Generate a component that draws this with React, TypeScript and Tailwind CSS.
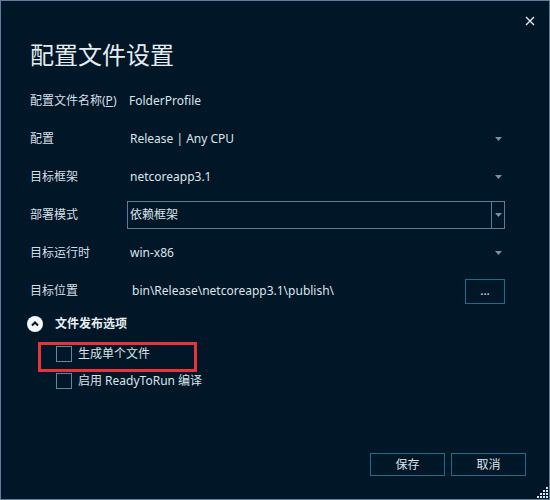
import React from "react";

const font = {
  fontFamily: '"Segoe UI", "Noto Sans", "Noto Sans CJK SC", sans-serif',
};

function Arrow() {
  return (
    <svg width="7" height="4" viewBox="0 0 7 4">
      <path d="M0 0 H7 L3.5 4 Z" fill="#6c95ad" />
    </svg>
  );
}

function Dropdown({ value, active }: { value: string; active?: boolean }) {
  return (
    <div
      className={
        "flex h-[28px] w-[378px] items-stretch border " +
        (active ? "border-[#5a7d98]" : "border-transparent")
      }
    >
      <div className="flex flex-1 items-center pl-[2px]">{value}</div>
      <div
        className={
          "flex w-[13px] items-center justify-center border-l " +
          (active ? "border-[#5a7d98]" : "border-transparent")
        }
      >
        <Arrow />
      </div>
    </div>
  );
}

function Row({
  label,
  children,
  tall,
}: {
  label: React.ReactNode;
  children: React.ReactNode;
  tall?: boolean;
}) {
  return (
    <div className={"flex items-center " + (tall ? "h-[39px]" : "h-[38px]")}>
      <div className="w-[97px] shrink-0 text-[#d6dfe5]">{label}</div>
      {children}
    </div>
  );
}

function CheckBox() {
  return (
    <div className="h-[16px] w-[16px] shrink-0 border border-[#5b8aa6]" />
  );
}

export default function App() {
  return (
    <div
      className="relative flex h-[500px] w-[550px] flex-col border border-[#5e7e9c] bg-[#011627] text-[12px] text-[#dbe4ea]"
      style={font}
    >
      <div className="flex h-[38px] justify-end pr-[14px] pt-[15px]">
        <svg width="10" height="10" viewBox="0 0 10 10">
          <path
            d="M1 1 L9 9 M9 1 L1 9"
            stroke="#e2ebf0"
            strokeWidth="1.4"
          />
        </svg>
      </div>

      <div className="pl-[29px] text-[24px] leading-[32px] text-[#e3edf2]">
        配置文件设置
      </div>

      <div className="mt-[10px] flex flex-col pl-[29px]">
        <Row
          tall
          label={
            <span>
              配置文件名称(<span className="underline">P</span>)
            </span>
          }
        >
          <span className="pl-[2px]">FolderProfile</span>
        </Row>
        <Row label="配置">
          <Dropdown value="Release | Any CPU" />
        </Row>
        <Row label="目标框架">
          <Dropdown value="netcoreapp3.1" />
        </Row>
        <Row label="部署模式">
          <Dropdown value="依赖框架" active />
        </Row>
        <Row label="目标运行时">
          <Dropdown value="win-x86" />
        </Row>
        <Row label="目标位置">
          <div className="flex w-[378px] items-center">
            <span className="flex-1 pl-[5px]">
              bin\Release\netcoreapp3.1\publish\
            </span>
            <button className="flex h-[25px] w-[40px] items-center justify-center border border-[#1f6d8b] leading-none">
              ...
            </button>
          </div>
        </Row>
      </div>

      <div className="flex h-[28px] items-center gap-[12px] pl-[26px]">
        <svg width="16" height="16" viewBox="0 0 16 16">
          <circle cx="8" cy="8" r="8" fill="#f4f7f9" />
          <path
            d="M5 9.5 L8 6.5 L11 9.5"
            stroke="#011627"
            strokeWidth="2"
            fill="none"
          />
        </svg>
        <span className="font-bold text-[#e6eef2]">文件发布选项</span>
      </div>

      <div className="ml-[37px] mt-[4px] flex h-[30px] w-[159px] items-start gap-[6px] border-[3px] border-[#e8333c] pl-[15px] pt-[1px]">
        <CheckBox />
        <span className="leading-[16px]">生成单个文件</span>
      </div>
      <div className="ml-[55px] mt-[1px] flex items-center gap-[6px]">
        <CheckBox />
        <span className="leading-[16px]">启用 ReadyToRun 编译</span>
      </div>

      <div className="flex-1" />

      <div className="flex justify-end gap-[6px] pb-[23px] pr-[23px]">
        <button className="flex h-[23px] w-[75px] items-center justify-center border border-[#1f6d8b] text-[#dbe4ea]">
          保存
        </button>
        <button className="flex h-[23px] w-[75px] items-center justify-center border border-[#1f6d8b] text-[#dbe4ea]">
          取消
        </button>
      </div>

      <svg
        className="absolute bottom-[1px] right-[1px]"
        width="11"
        height="11"
        viewBox="0 0 11 11"
      >
        {[
          [9, 0],
          [9, 3],
          [6, 3],
          [9, 6],
          [6, 6],
          [3, 6],
          [9, 9],
          [6, 9],
          [3, 9],
          [0, 9],
        ].map(([x, y], i) => (
          <rect key={i} x={x} y={y} width="2" height="2" fill="#dfe8ee" />
        ))}
      </svg>
    </div>
  );
}
